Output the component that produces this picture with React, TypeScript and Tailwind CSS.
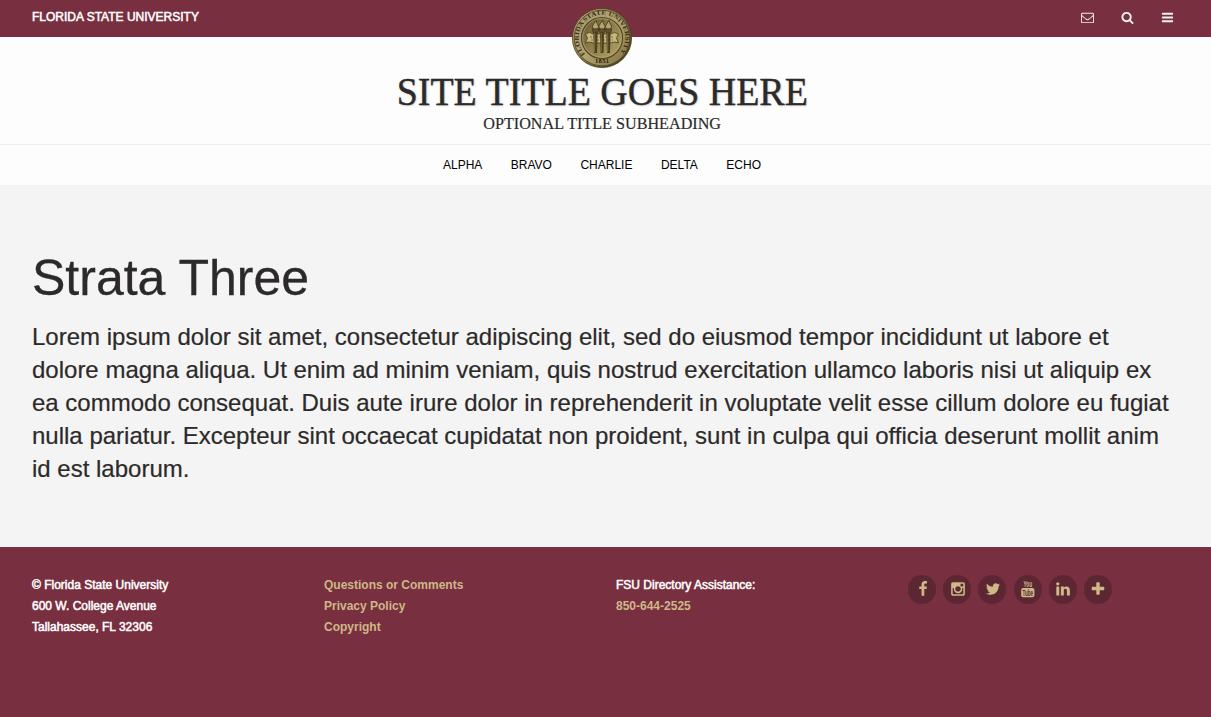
import React from "react";

const icons = {
  mail: "M1664 1504v-768q-32 36-69 66-268 206-426 338-51 43-83 67t-86.5 48.5-102.5 24.5h-2q-48 0-102.5-24.5t-86.5-48.5-83-67q-158-132-426-338-37-30-69-66v768q0 13 9.5 22.5t22.5 9.5h1472q13 0 22.5-9.5t9.5-22.5zm0-1051v-24.5l-.5-13-3-12.5-5.5-9-9-7.5-14-2.5h-1472q-13 0-22.5 9.5t-9.5 22.5q0 168 147 284 193 152 401 317 6 5 35 29.5t46 37.5 44.5 31.5 50.5 27.5 43 9h2q20 0 43-9t50.5-27.5 44.5-31.5 46-37.5 35-29.5q208-165 401-317 54-43 100.5-115.5t46.5-131.5zm128-37v1088q0 66-47 113t-113 47h-1472q-66 0-113-47t-47-113v-1088q0-66 47-113t113-47h1472q66 0 113 47t47 113z",
  search: "M1216 832q0-185-131.5-316.5t-316.5-131.5-316.5 131.5-131.5 316.5 131.5 316.5 316.5 131.5 316.5-131.5 131.5-316.5zm512 832q0 52-38 90t-90 38q-54 0-90-38l-343-342q-179 124-399 124-143 0-273.5-55.5t-225-150-150-225-55.5-273.5 55.5-273.5 150-225 225-150 273.5-55.5 273.5 55.5 225 150 150 225 55.5 273.5q0 220-124 399l343 343q37 37 37 90z",
  bars: "M1664 1344v128q0 26-19 45t-45 19h-1408q-26 0-45-19t-19-45v-128q0-26 19-45t45-19h1408q26 0 45 19t19 45zm0-512v128q0 26-19 45t-45 19h-1408q-26 0-45-19t-19-45v-128q0-26 19-45t45-19h1408q26 0 45 19t19 45zm0-512v128q0 26-19 45t-45 19h-1408q-26 0-45-19t-19-45v-128q0-26 19-45t45-19h1408q26 0 45 19t19 45z",
  facebook: "M1343 12v264h-157q-86 0-116 36t-30 108v189h293l-39 296h-254v759h-306v-759h-255v-296h255v-218q0-186 104-288.5t277-102.5q147 0 228 12z",
  instagram: "M1490 1426v-648h-135q20 63 20 131 0 126-64 232.5t-174 168.5-240 62q-197 0-337-135.5t-140-327.5q0-68 20-131h-141v648q0 26 17.5 43.5t43.5 17.5h1069q25 0 43-17.5t18-43.5zm-284-533q0-124-90.5-211.5t-218.5-87.5q-127 0-217.5 87.5t-90.5 211.5 90.5 211.5 217.5 87.5q128 0 218.5-87.5t90.5-211.5zm284-360v-165q0-28-20-48.5t-49-20.5h-174q-29 0-49 20.5t-20 48.5v165q0 29 20 49t49 20h174q29 0 49-20t20-49zm174-208v1142q0 81-58 139t-139 58h-1142q-81 0-139-58t-58-139v-1142q0-81 58-139t139-58h1142q81 0 139 58t58 139z",
  twitter: "M1684 408q-67 98-162 167 1 14 1 42 0 130-38 259.5t-115.5 248.5-184.5 210.5-258 146-323 54.5q-271 0-496-145 35 4 78 4 225 0 401-138-105-2-188-64.5t-114-159.5q33 5 61 5 43 0 85-11-112-23-185.5-111.5t-73.5-205.5v-4q68 38 146 41-66-44-105-115t-39-154q0-88 44-163 121 149 294.5 238.5t371.5 99.5q-8-38-8-74 0-134 94.5-228.5t228.5-94.5q140 0 236 102 109-21 205-78-37 115-142 178 93-10 186-50z",
  linkedin: "M477 625v991h-330v-991h330zm21-306q1 73-50.5 122t-135.5 49h-2q-82 0-132-49t-50-122q0-74 51.5-122.5t134.5-48.5 133 48.5 51 122.5zm1166 729v568h-329v-530q0-105-40.5-164.5t-126.5-59.5q-63 0-105.5 34.5t-63.5 85.5q-11 30-11 81v553h-329q2-399 2-647t-1-296l-1-48h329v144h-2q20-32 41-56t56.5-52 87-43.5 114.5-15.5q171 0 275 113.5t104 332.5z",
  plus: "M1600 736v192q0 40-28 68t-68 28h-416v416q0 40-28 68t-68 28h-192q-40 0-68-28t-28-68v-416h-416q-40 0-68-28t-28-68v-192q0-40 28-68t68-28h416v-416q0-40 28-68t68-28h192q40 0 68 28t28 68v416h416q40 0 68 28t28 68z",
};

function Icon({ name, className }: { name: keyof typeof icons; className: string }) {
  return (
    <svg viewBox="0 0 1792 1792" fill="currentColor" className={className} aria-hidden="true">
      <path d={icons[name]} />
    </svg>
  );
}

function YouTubeIcon() {
  return (
    <svg viewBox="0 0 18 20" className="h-5 w-[18px] overflow-visible" fill="currentColor" fontFamily="Liberation Sans, sans-serif">
      <text x="4.5" y="8" fontSize="8.6" textLength="8.6" lengthAdjust="spacingAndGlyphs" fontWeight="700">You</text>
      <rect x="2.2" y="9" width="13.2" height="9.2" rx="2" />
      <text x="3.5" y="16.8" fontSize="8.2" textLength="10.6" lengthAdjust="spacingAndGlyphs" fontWeight="700" fill="#5c2733">Tube</text>
    </svg>
  );
}

function Torch({ x }: { x: number }) {
  return (
    <g transform={`translate(${x} 0)`}>
      <path d="M-2.4 22 Q-4.2 19 -1.6 16.6 Q-1 15 .8 13.2 Q.4 15.6 2 17.2 Q4 19 2.4 22Z" fill="#b5a56d" stroke="#3a3018" strokeWidth=".8" />
      <path d="M-3.2 22h6.4l-.7 3.4h-5z" fill="#62542f" stroke="#2f2713" strokeWidth=".5" />
      <path d="M-2.1 25.4h4.2l-.6 20.6h-3z" fill="#4c3f20" />
      <path d="M-.8 26v19" stroke="#a3935c" strokeWidth=".6" />
    </g>
  );
}

function Seal() {
  return (
    <svg viewBox="0 0 62 62" className="size-[62px]">
      <defs>
        <linearGradient id="rim" x1="0" y1="0" x2="1" y2="1">
          <stop offset="0" stopColor="#c9bb8b" />
          <stop offset=".45" stopColor="#8d7d4c" />
          <stop offset="1" stopColor="#33290f" />
        </linearGradient>
        <linearGradient id="band" x1="0" y1="0" x2="1" y2="1">
          <stop offset="0" stopColor="#a59a70" />
          <stop offset=".5" stopColor="#b3a472" />
          <stop offset="1" stopColor="#7b6b3b" />
        </linearGradient>
        <linearGradient id="field" x1="0" y1="0" x2="1" y2="1">
          <stop offset="0" stopColor="#665932" />
          <stop offset="1" stopColor="#b7a668" />
        </linearGradient>
        <path id="arc" d="M15.6 48.5 A23.3 23.3 0 1 1 46.4 48.5" />
      </defs>
      <circle cx="31" cy="31" r="29.6" fill="url(#rim)" stroke="#4a3d1d" strokeWidth=".8" />
      <circle cx="31" cy="31" r="27.8" fill="url(#band)" stroke="#554824" strokeWidth=".8" />
      <circle cx="31" cy="31" r="20.5" fill="url(#field)" stroke="#524522" strokeWidth="1.2" />
      <circle cx="31" cy="31" r="19.4" fill="none" stroke="#c9bb86" strokeWidth=".5" />
      <text fontFamily="Liberation Serif, serif" fontWeight="700" fontSize="6.2" fill="#352b12">
        <textPath href="#arc" startOffset="2" textLength="106" lengthAdjust="spacingAndGlyphs">FLORIDA STATE UNIVERSITY</textPath>
      </text>
      <path d="M14.5 27q4-3 8 0h17q4-3 8 0l-2 4 2 5q-4-2-8 0h-17q-4-2-8 0l2-5z" fill="#c6b77e" stroke="#4b3e1c" strokeWidth=".8" />
      <path d="M19 30h24M20 33h22" stroke="#796a3d" strokeWidth="1" strokeDasharray="2 1" />
      <Torch x={24.5} />
      <Torch x={31} />
      <Torch x={37.5} />
      <text x="24" y="56.3" fontFamily="Liberation Serif, serif" fontWeight="700" fontSize="6.6" fill="#241c06" textLength="14">1851</text>
    </svg>
  );
}

const nav = ["ALPHA", "BRAVO", "CHARLIE", "DELTA", "ECHO"];

function Social({ children }: { children: React.ReactNode }) {
  return (
    <a className="flex h-[29px] w-7 items-center justify-center rounded-full bg-[#5c2733] pb-px pl-px text-[#ceb888]">{children}</a>
  );
}

export default function App() {
  return (
    <div className="flex h-[717px] w-[1211px] flex-col overflow-hidden bg-[#f4f4f4] font-['Liberation_Sans',Arial,sans-serif] text-[#2c2a29]">
      <div className="flex h-[37px] shrink-0 items-center justify-between bg-[#782f40] pr-[37.5px] pb-[3px] pl-8 text-white">
        <span className="text-xs [-webkit-text-stroke:0.5px_white]">FLORIDA STATE UNIVERSITY</span>
        <div className="flex items-center gap-[26.7px] text-[#f6f0f1]">
          <Icon name="mail" className="size-[13px]" />
          <Icon name="search" className="size-[13px]" />
          <Icon name="bars" className="size-[13px]" />
        </div>
      </div>

      <header className="flex h-[107px] shrink-0 flex-col items-center bg-[#fdfdfd] pr-[7px]">
        <div className="relative z-10 -mt-[30px] h-[62px]">
          <Seal />
        </div>
        <h1 className="-mt-px h-[46px] scale-x-[0.925] font-['Liberation_Serif',serif] text-[41px] leading-[46px] whitespace-nowrap [-webkit-text-stroke:0.4px_#2c2a29] [text-shadow:1px_1px_2px_rgba(0,0,0,0.2)]">
          SITE TITLE GOES HERE
        </h1>
        <p className="mt-px scale-x-[0.95] font-['Liberation_Serif',serif] text-[17px] leading-[18px] whitespace-nowrap [-webkit-text-stroke:0.2px_#2c2a29]">OPTIONAL TITLE SUBHEADING</p>
      </header>

      <nav className="flex h-[41px] shrink-0 items-center justify-center gap-[28.5px] border-t border-[#eeeeee] bg-[#fdfdfd] pr-[7px] text-xs text-black">
        {nav.map((item) => (
          <a key={item}>{item}</a>
        ))}
      </nav>

      <main className="h-[362px] shrink-0 pt-[63px] pr-8 pl-8">
        <h2 className="text-[50px] leading-[60px] [-webkit-text-stroke:0.3px_#2c2a29]">Strata Three</h2>
        <p className="mt-3 w-[1147px] text-2xl leading-[33px] [-webkit-text-stroke:0.2px_#2c2a29]">
          Lorem ipsum dolor sit amet, consectetur adipiscing elit, sed do eiusmod tempor incididunt ut labore et dolore magna aliqua. Ut enim ad minim veniam, quis nostrud exercitation ullamco laboris nisi ut aliquip ex ea commodo consequat. Duis aute irure dolor in reprehenderit in voluptate velit esse cillum dolore eu fugiat nulla pariatur. Excepteur sint occaecat cupidatat non proident, sunt in culpa qui officia deserunt mollit anim id est laborum.
        </p>
      </main>

      <footer className="grid flex-1 grid-cols-[292px_292px_292px_1fr] content-start bg-[#782f40] pt-7 pl-8 text-xs leading-[21px] text-white">
        <div className="flex flex-col [-webkit-text-stroke:0.5px_white]">
          <span>© Florida State University</span>
          <span>600 W. College Avenue</span>
          <span>Tallahassee, FL 32306</span>
        </div>
        <div className="flex flex-col font-bold text-[#ceb888]">
          <a>Questions or Comments</a>
          <a>Privacy Policy</a>
          <a>Copyright</a>
        </div>
        <div className="flex flex-col">
          <span className="[-webkit-text-stroke:0.5px_white]">FSU Directory Assistance:</span>
          <a className="font-bold text-[#ceb888]">850-644-2525</a>
        </div>
        <div className="flex items-start gap-[7.2px]">
          <Social><Icon name="facebook" className="size-4" /></Social>
          <Social><Icon name="instagram" className="size-4" /></Social>
          <Social><Icon name="twitter" className="size-4" /></Social>
          <Social><YouTubeIcon /></Social>
          <Social><Icon name="linkedin" className="size-4" /></Social>
          <Social><Icon name="plus" className="size-4" /></Social>
        </div>
      </footer>
    </div>
  );
}
